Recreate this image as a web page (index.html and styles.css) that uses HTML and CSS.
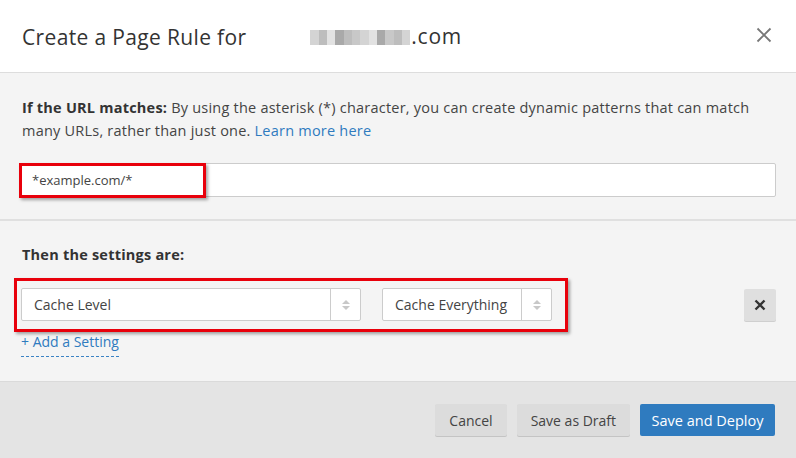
FILE: index.html
```html
<!DOCTYPE html>
<html>
<head>
<meta charset="utf-8">
<link rel="stylesheet" href="styles.css">
</head>
<body>
<div class="modal">
  <header class="modal-header">
    <h1 class="title">Create a Page Rule for <span class="domain"><span class="pix"><i class="p1"></i><i class="p2"></i><i class="p3"></i><i class="p4"></i><i class="p2"></i><i class="p5"></i><i class="p1"></i><i class="p3"></i><i class="p4"></i><i class="p5"></i><i class="p2"></i><i class="p1"></i></span><span class="tld">.com</span></span></h1>
    <span class="close">
      <svg width="16" height="16" viewBox="0 0 16 16"><path d="M1.5 1.5 L14.5 14.5 M14.5 1.5 L1.5 14.5" stroke="#777" stroke-width="1.8" fill="none"/></svg>
    </span>
  </header>
  <section class="section match">
    <p class="desc"><b>If the URL matches:</b> By using the asterisk (*) character, you can create dynamic patterns that can match many URLs, rather than just one. <a class="link" href="#">Learn more here</a></p>
    <div class="field">
      <div class="input">*example.com/*</div>
      <div class="mark mark-url"></div>
    </div>
  </section>
  <section class="section settings">
    <p class="heading">Then the settings are:</p>
    <div class="row">
      <div class="select wide"><span class="sel-text">Cache Level</span><span class="arrows"><i class="up"></i><i class="down"></i></span></div>
      <div class="select narrow"><span class="sel-text">Cache Everything</span><span class="arrows"><i class="up"></i><i class="down"></i></span></div>
      <span class="spacer"></span>
      <button class="remove"><svg width="12" height="12" viewBox="0 0 12 12"><path d="M1.5 1.5 L10.5 10.5 M10.5 1.5 L1.5 10.5" stroke="#333" stroke-width="2.4" fill="none"/></svg></button>
      <div class="mark mark-settings"></div>
    </div>
    <a class="add" href="#">+ Add a Setting</a>
  </section>
  <footer class="footer">
    <button class="btn">Cancel</button>
    <button class="btn">Save as Draft</button>
    <button class="btn primary">Save and Deploy</button>
  </footer>
</div>
</body>
</html>
```
FILE: styles.css
```css
* { box-sizing: border-box; }
html, body { margin: 0; padding: 0; }
body {
  font-family: "Open Sans", "Liberation Sans", sans-serif;
  color: #333;
  background: #fff;
}
.modal {
  width: 796px;
  height: 458px;
  display: flex;
  flex-direction: column;
  overflow: hidden;
}
.modal-header {
  height: 73px;
  border-bottom: 1px solid #ddd;
  background: #fff;
  display: flex;
  align-items: center;
  justify-content: space-between;
  padding: 0 24px 0 22px;
}
.title {
  margin: 0;
  font-size: 21px;
  font-weight: 400;
  color: #333;
  letter-spacing: 0.35px;
  padding-top: 1px;
}
.domain {
  margin-left: 58px;
  display: inline-flex;
  align-items: center;
}
.tld { letter-spacing: 0.8px; }
.pix {
  display: inline-flex;
  width: 100px;
  height: 15px;
  margin-top: 2px;
  margin-right: 1px;
}
.pix i { flex: 1; height: 100%; }
.pix .p1 { background: #d4d4d4; }
.pix .p2 { background: #bdbdbd; }
.pix .p3 { background: #e2e2e2; }
.pix .p4 { background: #a9a9a9; }
.pix .p5 { background: #c8c8c8; }
.close { display: flex; margin-top: -2px; }
.section {
  background: #f4f4f4;
  padding: 23px 20px 22px 20px;
}
.match { border-bottom: 2px solid #e0e0e0; height: 148px; }
.settings { height: 160px; padding-top: 22px; }
.desc, .heading {
  margin: 0 0 0 2px;
  font-size: 14.5px;
  letter-spacing: 0.22px;
  line-height: 23px;
  color: #444;
}
.desc b, .heading { font-weight: 700; color: #333; }
.link { color: #2f7bbf; text-decoration: none; }
.field { position: relative; margin-top: 21px; }
.input {
  height: 34px;
  background: #fff;
  border: 1px solid #ccc;
  border-radius: 2px;
  font-size: 13px;
  line-height: 32px;
  padding-left: 11px;
  color: #444;
}
.mark {
  position: absolute;
  border: 3px solid #e8000b;
  box-shadow: 2px 2px 3px rgba(0,0,0,0.35);
  pointer-events: none;
}
.mark-url { left: -1px; top: 0; width: 187px; height: 35px; }
.row {
  position: relative;
  display: flex;
  align-items: center;
  margin-top: 22px;
  padding-left: 1px;
}
.select {
  height: 33px;
  background: #fff;
  border: 1px solid #ccc;
  border-radius: 2px;
  display: flex;
  align-items: stretch;
  font-size: 14px;
  color: #444;
}
.wide { width: 340px; }
.narrow { width: 170px; margin-left: 21px; }
.sel-text { flex: 1; padding-left: 12px; line-height: 31px; white-space: nowrap; overflow: hidden; }
.arrows {
  width: 30px;
  border-left: 1px solid #ccc;
  display: flex;
  flex-direction: column;
  align-items: center;
  justify-content: center;
  gap: 2px;
}
.arrows i { width: 0; height: 0; border-left: 4px solid transparent; border-right: 4px solid transparent; }
.arrows .up { border-bottom: 4px solid #c8c8c8; }
.arrows .down { border-top: 4px solid #c8c8c8; }
.spacer { flex: 1; }
.remove {
  width: 32px;
  height: 32px;
  border: 0;
  border-radius: 2px;
  background: #dfdfdf;
  box-shadow: 0 1px 0 #cfcfcf;
  display: flex;
  align-items: center;
  justify-content: center;
  padding: 0;
}
.mark-settings { left: -6px; top: -10px; width: 554px; height: 54px; }
.add {
  display: inline-block;
  margin-top: 11px;
  margin-left: 1px;
  font-size: 14px;
  line-height: 20px;
  padding-bottom: 4px;
  color: #2f7bbf;
  text-decoration: none;
  border-bottom: 1px dashed #3a82c4;
}
.footer {
  flex: 1;
  background: #e4e4e4;
  border-top: 1px solid #dadada;
  display: flex;
  justify-content: flex-end;
  align-items: flex-start;
  padding: 22px 21px 0 0;
  gap: 10px;
}
.btn {
  height: 32px;
  border: 0;
  border-radius: 2px;
  background: #dcdcdc;
  box-shadow: 0 1px 0 #c4c4c4;
  font-family: "Open Sans", "Liberation Sans", sans-serif;
  font-size: 14px;
  color: #444;
  padding: 0 14px;
}
.primary {
  background: #2f7bbf;
  color: #fff;
  box-shadow: none;
  padding: 0 11.5px;
  font-size: 14.5px;
  font-weight: 500;
}
```
